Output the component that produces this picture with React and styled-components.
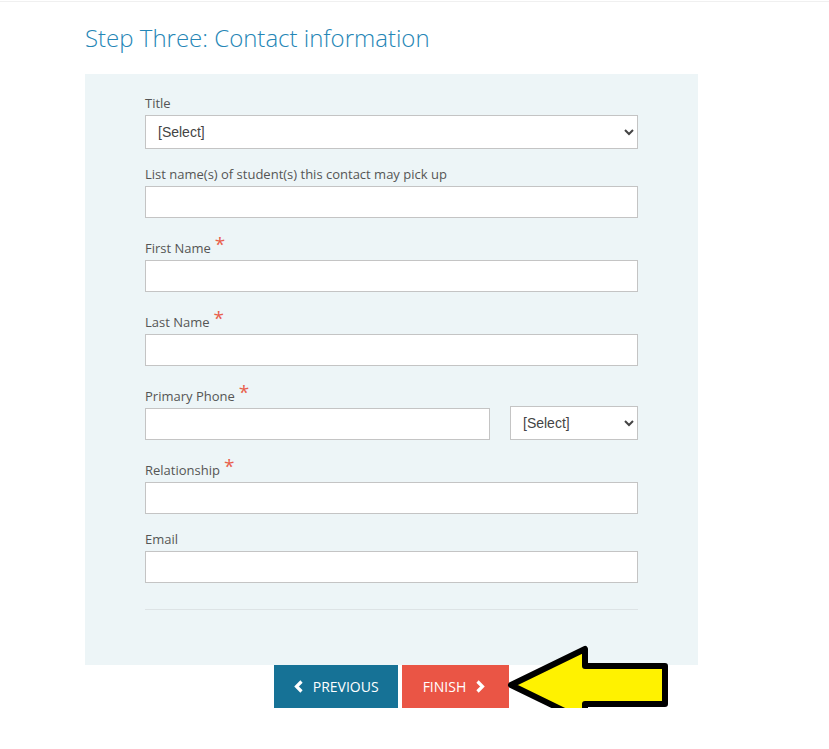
import React from 'react';
import styled, { createGlobalStyle } from 'styled-components';

const GlobalStyle = createGlobalStyle`
  body {
    margin: 0;
    background: #ffffff;
    font-family: "Open Sans", "Liberation Sans", sans-serif;
  }
`;

const TopLine = styled.div`
  height: 1px;
  margin-top: 1px;
  background: #f0f0f0;
`;

const Page = styled.div`
  width: 613px;
  margin-left: 85px;
`;

const Heading = styled.h2`
  margin: 21px 0 21px;
  font-size: 24px;
  line-height: 30px;
  font-weight: 300;
  color: #2586b6;
`;

const Panel = styled.div`
  background: #edf5f7;
  padding: 19px 60px 55px;
`;

const Group = styled.div`
  margin-bottom: 15px;
`;

const Label = styled.label`
  display: flex;
  align-items: flex-end;
  min-height: ${(p) => (p.required ? 25 : 20)}px;
  margin-bottom: 2px;
  font-size: 13px;
  line-height: 20px;
  color: #555555;
`;

const Star = styled.span`
  align-self: flex-start;
  margin-left: 4px;
  padding-top: 2px;
  font-size: 19px;
  line-height: 18px;
  color: #e8604c;
`;

const TextInput = styled.input`
  display: block;
  box-sizing: border-box;
  width: ${(p) => p.width || '100%'};
  height: 32px;
  margin: 0;
  padding: 0 10px;
  border: 1px solid #c4c4c4;
  border-radius: 0;
  background: #ffffff;
  font-family: "Liberation Sans", sans-serif;
  font-size: 14px;
`;

const Select = styled.select`
  display: block;
  box-sizing: border-box;
  width: ${(p) => p.width || '100%'};
  height: 34px;
  margin: 0;
  padding: 0 8px;
  border: 1px solid #c4c4c4;
  border-radius: 0;
  background: #ffffff;
  color: #444444;
  font-family: "Liberation Sans", sans-serif;
  font-size: 14px;
`;

const PhoneRow = styled.div`
  display: flex;
  align-items: flex-end;
  justify-content: space-between;
  margin-top: -2px;
`;

const Divider = styled.div`
  height: 1px;
  margin-top: 26px;
  background: #dde3e5;
`;

const ButtonRow = styled.div`
  position: relative;
  display: flex;
  justify-content: center;
  gap: 4px;
`;

const Button = styled.button`
  display: flex;
  align-items: center;
  gap: 10px;
  height: 43px;
  padding: ${(p) => (p.primary ? '0 24px 0 21px' : '0 19px 0 20px')};
  border: none;
  border-radius: 0;
  background: ${(p) => (p.primary ? '#ea5545' : '#167296')};
  color: #ffffff;
  font-family: "Open Sans", sans-serif;
  font-size: 14px;
  text-transform: uppercase;
`;

const Pointer = styled.svg`
  position: absolute;
  left: 418px;
  top: -23px;
`;

const Chevron = ({ dir }) => (
  <svg width="9" height="13" viewBox="0 0 9 13">
    <path
      d={dir === 'left' ? 'M7.5 1.5 L2.5 6.5 L7.5 11.5' : 'M1.5 1.5 L6.5 6.5 L1.5 11.5'}
      fill="none"
      stroke="#ffffff"
      strokeWidth="3.2"
    />
  </svg>
);

const Required = () => <Star>*</Star>;

const App = () => {
  return (
    <>
      <GlobalStyle />
      <TopLine />
      <Page>
        <Heading>Step Three: Contact information</Heading>
        <Panel>
          <Group>
            <Label>Title</Label>
            <Select>
              <option>[Select]</option>
            </Select>
          </Group>

          <Group>
            <Label>List name(s) of student(s) this contact may pick up</Label>
            <TextInput />
          </Group>

          <Group>
            <Label required>
              First Name
              <Required />
            </Label>
            <TextInput />
          </Group>

          <Group>
            <Label required>
              Last Name
              <Required />
            </Label>
            <TextInput />
          </Group>

          <Group>
            <Label required>
              Primary Phone
              <Required />
            </Label>
            <PhoneRow>
              <TextInput width="345px" />
              <Select width="128px">
                <option>[Select]</option>
              </Select>
            </PhoneRow>
          </Group>

          <Group>
            <Label required>
              Relationship
              <Required />
            </Label>
            <TextInput />
          </Group>

          <Group>
            <Label>Email</Label>
            <TextInput />
          </Group>

          <Divider />
        </Panel>

        <ButtonRow>
          <Button>
            <Chevron dir="left" />
            Previous
          </Button>
          <Button primary>
            Finish
            <Chevron dir="right" />
          </Button>
          <Pointer width="170" height="86" viewBox="0 0 170 86">
            <polygon
              points="8,43 82,7 82,24 162,24 162,62 82,62 82,79"
              fill="#fff200"
              stroke="#000000"
              strokeWidth="6"
              strokeLinejoin="round"
            />
          </Pointer>
        </ButtonRow>
      </Page>
    </>
  );
};

export default App;
